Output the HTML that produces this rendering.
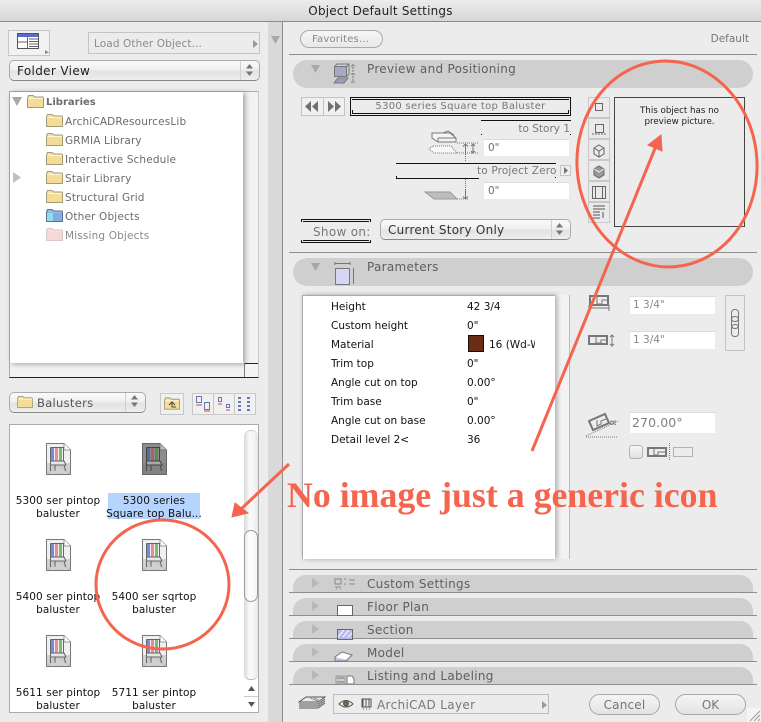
<!DOCTYPE html>
<html><head><meta charset="utf-8">
<style>
*{box-sizing:border-box}
html,body{margin:0;padding:0}
body{width:761px;height:722px;position:relative;overflow:hidden;background:#ececec;font-family:"DejaVu Sans","Liberation Sans",sans-serif;font-size:10.5px;color:#000}
div,span.a{position:absolute}
.t{white-space:nowrap;line-height:14px;height:14px}
.g{color:#666}
.lib{color:#6b6b6b;font-size:10.5px;letter-spacing:.15px}
.bar{left:293px;width:460px;background:#cfcfcf;border-radius:13px 13px 0 0}
.line{left:289px;width:468px;height:1px;background:#8e8e8e}
.barT{left:367px;color:#5f5f5f;font-size:12px;letter-spacing:.3px}
.pop{background:linear-gradient(#fafafa,#f0f0f0 45%,#e2e2e2 55%,#eee);border:1px solid #aaa;border-bottom-color:#888;border-radius:5px}
.field{background:#fff;border:1px solid #eaeaea;border-top-color:#dcdcdc;font-size:10.5px;color:#6e6e6e;padding-left:4px;line-height:17px}
.sb{background:#e9e9e9;border:1px solid #c4c4c4}
.p{left:331px;font-size:10.5px;color:#111}
.v{left:467px;font-size:10.5px;color:#111}
.lab{width:110px;text-align:center;font-size:10.5px;color:#111;letter-spacing:.1px}
.side{left:588px;width:22px;height:21px;background:#eaeaea;border:1px solid #c8c8c8}
.ch{width:25px;height:32px}
</style></head><body>
<svg width="0" height="0" style="position:absolute">
<defs>
<symbol id="fold" viewBox="0 0 17 13"><path d="M1 3V1.500Q1 .5 2 .5H6L8 2H15.500Q16.500 2 16.500 3V12.500H.5V3Z" fill="#f4e3a8" stroke="#a39a78"/><rect x="1" y="4" width="15" height="8" fill="#f3dc96"/><rect x="1" y="3" width="15" height="1" fill="#fff6d2"/></symbol>
<symbol id="foldb" viewBox="0 0 17 13"><path d="M1 3V1.500Q1 .5 2 .5H6L8 2H15.500Q16.500 2 16.500 3V12.500H.5V3Z" fill="#8fbce0" stroke="#5c6f96"/><rect x="1" y="4" width="15" height="8" fill="#7faee0"/><rect x="1" y="4" width="6" height="8" fill="#8fdcec"/></symbol>
<symbol id="foldr" viewBox="0 0 17 13"><path d="M1 3V1.500Q1 .5 2 .5H6L8 2H15.500Q16.500 2 16.500 3V12.500H.5V3Z" fill="#f6dedc" stroke="#d8c8c6"/><rect x="1" y="4" width="15" height="8" fill="#f5d9d6"/></symbol>
<symbol id="chair" viewBox="0 0 25 32">
<path d="M.5.5H18L24.500 7V31.500H.5Z" fill="#f0f0f0" stroke="#777"/><path d="M18 .5V7H24.500" fill="#fff" stroke="#999"/>
<path d="M1 20H24V31H1Z" fill="#d0d0d0"/><path d="M1 31L12 21L24 31" fill="none" stroke="#bbb"/>
<rect x="5" y="5" width="3" height="14" fill="#7c86e8"/><rect x="8" y="5" width="3" height="14" fill="#eee"/><rect x="9" y="5" width="3" height="14" fill="#e88c8c"/><rect x="13" y="5" width="3" height="14" fill="#7cb87c"/>
<path d="M4.500 4.500H17.500V19M4.500 4.500V28M17.500 19L19.500 28" fill="none" stroke="#666"/>
<path d="M4.500 18H18L20 22H4.500Z" fill="#e6e6e6" stroke="#666"/><path d="M5 22H20M9 22V28" stroke="#666" fill="none"/>
</symbol>
<symbol id="chairg" viewBox="0 0 25 32">
<path d="M.5.5H18L24.500 7V31.500H.5Z" fill="#8d8d8d" stroke="#666"/><path d="M18 .5V7H24.500" fill="#bbb" stroke="#777"/>
<path d="M1 20H24V31H1Z" fill="#838383"/>
<rect x="5" y="5" width="3" height="14" fill="#5f66a8"/><rect x="9" y="5" width="3" height="14" fill="#a06464"/><rect x="13" y="5" width="3" height="14" fill="#5a8a5a"/>
<path d="M4.500 4.500H17.500V19M4.500 4.500V28M17.500 19L19.500 28" fill="none" stroke="#444"/>
<path d="M4.500 18H18L20 22H4.500Z" fill="#a8a8a8" stroke="#444"/><path d="M5 22H20M9 22V28" stroke="#444" fill="none"/>
</symbol>
</defs></svg>

<!-- title bar -->
<div style="left:0;top:0;width:761px;height:22px;background:linear-gradient(#ededed,#d6d6d6);border-bottom:1px solid #8c8c8c"></div>
<div class="t" style="left:0;width:761px;top:4px;text-align:center;font-size:12px;color:#222;letter-spacing:.2px">Object Default Settings</div>

<!-- divider -->
<div style="left:268px;top:22px;width:14px;height:700px;background:#d9d9d9"></div>
<div style="left:282px;top:22px;width:1px;height:700px;background:#8e8e8e"></div>
<svg style="position:absolute;left:271px;top:36px" width="9" height="9"><path d="M0 0H9L4.500 8Z" fill="#a9a9a9"/></svg>

<!-- left top -->
<div style="left:8px;top:30px;width:42px;height:26px;border:1px solid #c6c6c6;background:#f2f2f2"></div>
<svg style="position:absolute;left:17px;top:33px" width="22" height="16"><rect x=".5" y=".5" width="21" height="15" fill="#fff" stroke="#555"/><rect x="1" y="1" width="20" height="3" fill="#5b6bc8"/><path d="M.5 9H10M10.500 4V15M12 6H21M12 8.500H21M12 11H21M12 13.500H21" stroke="#666" fill="none"/></svg>
<svg style="position:absolute;left:44px;top:49px" width="6" height="6"><path d="M1 1L5 3.500L1 5Z" fill="#888"/></svg>
<div style="left:88px;top:32px;width:172px;height:22px;border:1px solid #c4c4c4;background:#ececec"></div>
<div class="t" style="left:94px;top:37px;color:#8b8b8b;letter-spacing:.1px">Load Other Object...</div>
<svg style="position:absolute;left:253px;top:40px" width="6" height="8"><path d="M0 0L5 4L0 8Z" fill="#999"/></svg>
<div class="pop" style="left:9px;top:60px;width:251px;height:21px"></div>
<div class="t" style="left:17px;top:64px;font-size:12px;color:#222;letter-spacing:.35px">Folder View</div>
<div style="left:240px;top:61px;width:1px;height:19px;background:#d0d0d0"></div>
<svg style="position:absolute;left:245px;top:64px" width="9" height="13"><path d="M4.500 0L8 4.500H1ZM4.500 12L8 7.500H1Z" fill="#777"/></svg>

<!-- tree -->
<div style="left:9px;top:91px;width:250px;height:287px;background:#f2f2f2;border:1px solid #aaa;border-bottom-color:#222;border-right-color:#c8c8c8"></div>
<div style="left:10px;top:92px;width:233px;height:271px;background:#fff;box-shadow:2px 1px 5px rgba(0,0,0,.35)"></div>
<div style="left:244px;top:363px;width:14px;height:14px;background:#f4f4f4;border-left:1px solid #777;border-top:1px solid #222"></div>
<svg style="position:absolute;left:12px;top:97px" width="11" height="9"><path d="M0 0H10L5 9Z" fill="#a8a8a8"/></svg>
<svg style="position:absolute;left:13px;top:172px" width="9" height="11"><path d="M0 0L8 5.500L0 11Z" fill="#c0c0c0"/></svg>
<svg style="position:absolute;left:27px;top:95px" width="17" height="13"><use href="#fold"/></svg>
<svg style="position:absolute;left:46px;top:114px" width="17" height="13"><use href="#fold"/></svg>
<svg style="position:absolute;left:46px;top:133px" width="17" height="13"><use href="#fold"/></svg>
<svg style="position:absolute;left:46px;top:152px" width="17" height="13"><use href="#fold"/></svg>
<svg style="position:absolute;left:46px;top:171px" width="17" height="13"><use href="#fold"/></svg>
<svg style="position:absolute;left:46px;top:190px" width="17" height="13"><use href="#fold"/></svg>
<svg style="position:absolute;left:46px;top:209px" width="17" height="13"><use href="#foldb"/></svg>
<svg style="position:absolute;left:46px;top:228px" width="17" height="13"><use href="#foldr"/></svg>
<div class="t lib" style="left:46px;top:96px;font-weight:bold;font-size:10px;letter-spacing:0">Libraries</div>
<div class="t lib" style="left:65px;top:115px">ArchiCADResourcesLib</div>
<div class="t lib" style="left:65px;top:134px">GRMIA Library</div>
<div class="t lib" style="left:65px;top:153px">Interactive Schedule</div>
<div class="t lib" style="left:65px;top:172px">Stair Library</div>
<div class="t lib" style="left:65px;top:191px">Structural Grid</div>
<div class="t lib" style="left:65px;top:210px">Other Objects</div>
<div class="t lib" style="left:65px;top:229px;color:#8a8a8a">Missing Objects</div>

<!-- balusters row -->
<div class="pop" style="left:9px;top:392px;width:137px;height:21px"></div>
<svg style="position:absolute;left:17px;top:396px" width="16" height="12"><use href="#fold"/></svg>
<div class="t" style="left:37px;top:396px;font-size:11.500px;color:#555;letter-spacing:.3px">Balusters</div>
<div style="left:125px;top:393px;width:1px;height:19px;background:#d0d0d0"></div>
<svg style="position:absolute;left:130px;top:395px" width="9" height="13"><path d="M4.500 0L8 4.500H1ZM4.500 12L8 7.500H1Z" fill="#777"/></svg>
<div style="left:160px;top:393px;width:24px;height:22px;border:1px solid #c8c8c8;background:#f0f0f0"></div>
<svg style="position:absolute;left:164px;top:397px" width="16" height="13"><use href="#fold"/><path d="M5 8L8 5L11 8M8 5V10H12" stroke="#444" fill="none"/></svg>
<div style="left:192px;top:393px;width:64px;height:22px;border:1px solid #c8c8c8;background:#f0f0f0"></div>
<div style="left:213px;top:393px;width:1px;height:22px;background:#c8c8c8"></div>
<div style="left:234px;top:393px;width:1px;height:22px;background:#c8c8c8"></div>
<svg style="position:absolute;left:195px;top:395px" width="60" height="18" fill="none"><rect x="1.500" y="1.500" width="5" height="6" stroke="#6a74b8"/><path d="M1 10H7" stroke="#c05050"/><rect x="9.500" y="7.500" width="5" height="7" stroke="#6a74b8"/><path d="M9 16H15" stroke="#c05050"/><rect x="23.500" y="2.500" width="3" height="4" stroke="#6a74b8"/><path d="M23 9H27" stroke="#c05050"/><rect x="31.500" y="9.500" width="3" height="3" stroke="#6a74b8"/><path d="M31 15H35" stroke="#c05050"/><path d="M43 3H46M43 7H46M43 11H46M43 15H46M52 3H55M52 7H55M52 11H55M52 15H55" stroke="#6a74b8" stroke-width="2"/></svg>

<!-- object list -->
<div style="left:9px;top:424px;width:250px;height:289px;background:#fff;border:1px solid #aaa"></div>
<div style="left:244px;top:425px;width:14px;height:287px;background:#fff"></div>
<div style="left:244px;top:430px;width:14px;height:250px;background:linear-gradient(90deg,#d8d8d8,#fafafa 40%,#f6f6f6 70%,#e6e6e6);border-radius:7px 7px 6px 6px;border-top:1px solid #ccc;border-bottom:1px solid #bbb"></div>
<div style="left:244px;top:530px;width:14px;height:72px;background:linear-gradient(90deg,#ececec,#fff 40%,#f4f4f4);border:1px solid #9a9a9a;border-radius:7px"></div>
<div style="left:244px;top:696px;width:14px;height:1px;background:#ccc"></div>
<svg style="position:absolute;left:247px;top:686px" width="9" height="22"><path d="M4.500 0L8 5H1ZM4.500 21L8 16H1Z" fill="#555"/></svg>
<div style="left:108px;top:493px;width:92px;height:26px;background:#b5d5ff"></div>
<svg style="position:absolute;left:46px;top:443px" width="25" height="32"><use href="#chair"/></svg>
<svg style="position:absolute;left:142px;top:443px" width="25" height="32"><use href="#chairg"/></svg>
<svg style="position:absolute;left:46px;top:539px" width="25" height="32"><use href="#chair"/></svg>
<svg style="position:absolute;left:142px;top:539px" width="25" height="32"><use href="#chair"/></svg>
<svg style="position:absolute;left:46px;top:635px" width="25" height="32"><use href="#chair"/></svg>
<svg style="position:absolute;left:142px;top:635px" width="25" height="32"><use href="#chair"/></svg>
<div class="t lab" style="left:3px;top:494px">5300 ser pintop</div><div class="t lab" style="left:3px;top:507px">baluster</div>
<div class="t lab" style="left:99px;top:494px">5300 series</div><div class="t lab" style="left:99px;top:507px">Square top Balu...</div>
<div class="t lab" style="left:3px;top:590px">5400 ser pintop</div><div class="t lab" style="left:3px;top:603px">baluster</div>
<div class="t lab" style="left:99px;top:590px">5400 ser sqrtop</div><div class="t lab" style="left:99px;top:603px">baluster</div>
<div class="t lab" style="left:3px;top:686px">5611 ser pintop</div><div class="t lab" style="left:3px;top:699px">baluster</div>
<div class="t lab" style="left:99px;top:686px">5711 ser pintop</div><div class="t lab" style="left:99px;top:699px">baluster</div>

<!-- right top -->
<div style="left:300px;top:30px;width:83px;height:18px;border:1px solid #aaa;border-radius:9px;background:linear-gradient(#f6f6f6,#e8e8e8)"></div>
<div class="t" style="left:312px;top:33px;font-size:10px;color:#888;letter-spacing:.2px">Favorites...</div>
<div class="t" style="right:12px;top:32px;font-size:10.500px;color:#777">Default</div>
<div class="line" style="top:54px"></div>
<div class="bar" style="top:60px;height:28px;border-radius:14px"></div>
<svg style="position:absolute;left:311px;top:65px" width="10" height="8"><path d="M0 0H9L4.500 8Z" fill="#a8a8a8"/></svg>
<svg style="position:absolute;left:333px;top:63px" width="26" height="22" fill="none"><rect x="1.500" y="3.500" width="12" height="10" fill="#a5a9c6" stroke="#777"/><path d="M1.500 3.500L4 1H16V11L13.500 13.500M13.500 3.500L16 1" stroke="#777"/><path d="M5 15H15L11 20H1Z" fill="#9a9fbe" stroke="#777"/><path d="M20 1V20M18 3H22M18 11H22M18 19H22" stroke="#777" stroke-dasharray="2 1"/></svg>
<div class="t barT" style="top:62px">Preview and Positioning</div>

<!-- nav -->
<div style="left:301px;top:97px;width:44px;height:19px;border:1px solid #c4c4c4;background:#f0f0f0"></div>
<div style="left:323px;top:97px;width:1px;height:19px;background:#c4c4c4"></div>
<svg style="position:absolute;left:305px;top:101px" width="36" height="11"><path d="M6 0V11L0 5.500ZM13 0V11L7 5.500ZM23 0V11L29 5.500ZM30 0V11L36 5.500Z" fill="#707070"/></svg>
<div style="left:350px;top:97px;width:221px;height:19px;border:1px solid #111"></div>
<div style="left:352px;top:99px;width:217px;height:15px;border-bottom:1px solid #111;border-left:1px solid #111;border-right:1px solid #111;clip-path:inset(11px 0 0 0)"></div>
<div style="left:352px;top:99px;width:217px;height:1px;background:#111"></div>
<div class="t" style="left:350px;width:221px;top:100px;text-align:center;font-size:10px;color:#777;letter-spacing:.3px">5300 series Square top Baluster</div>

<!-- story -->
<div style="left:481px;top:120px;width:90px;height:1px;background:#111"></div>
<div class="t" style="right:191px;top:122px;font-size:10.500px;color:#7a7a7a">to Story 1</div>
<div style="left:481px;top:134px;width:1px;height:1px;background:#111"></div>
<div style="left:570px;top:134px;width:1px;height:1px;background:#111"></div>
<div class="field" style="left:483px;top:139px;width:87px;height:18px">0"</div>
<svg style="position:absolute;left:428px;top:130px" width="54" height="32" fill="none" stroke="#777"><path d="M4 3H22L28 8V12H10L4 8ZM10 8H28M10 8V12M15 3L20 1L26 5" fill="#f4f4f4"/><path d="M5 16H23L29 23H6L1 19Z" stroke-dasharray="1 1" fill="#f8f8f8"/><path d="M29 13H50M29 23H50M37.500 24V31" stroke-dasharray="1 1"/><path d="M37.500 14V24M35 16.500L37.500 14L40 16.500"/><path d="M45 14V23M43 16L45 14L47 16M43 21L45 23L47 21"/></svg>
<div style="left:396px;top:163px;width:160px;height:1px;background:#111"></div>
<div style="left:396px;top:178px;width:83px;height:1px;background:#111"></div>
<div style="left:396px;top:176px;width:1px;height:2px;background:#111"></div>
<div style="left:555px;top:177px;width:1px;height:1px;background:#111"></div>
<div class="t" style="left:477px;top:164px;font-size:10.500px;color:#7a7a7a;letter-spacing:.15px">to Project Zero</div>
<div style="left:560px;top:165px;width:11px;height:11px;border:1px solid #c4c4c4;background:#eee"></div>
<svg style="position:absolute;left:563px;top:167px" width="6" height="7"><path d="M1 0L5 3.500L1 7Z" fill="#777"/></svg>
<div class="field" style="left:483px;top:182px;width:87px;height:18px">0"</div>
<svg style="position:absolute;left:424px;top:178px" width="56" height="24" fill="none" stroke="#999"><path d="M1 14H26L33 21H10Z" fill="#bdbdbd"/><path d="M33 21H44M41.500 1V12" stroke="#777" stroke-dasharray="1 1"/><path d="M41.500 11V21M39 18.500L41.500 21L44 18.500" stroke="#777"/></svg>
<div style="left:301px;top:219px;width:70px;height:3px;border:1px solid #111;border-bottom:0"></div>
<div style="left:303px;top:221px;width:66px;height:1px;background:#111"></div>
<div style="left:301px;top:240px;width:70px;height:3px;border:1px solid #111;border-top:0"></div>
<div style="left:303px;top:240px;width:66px;height:1px;background:#111"></div>
<div class="t" style="left:313px;top:225px;font-size:12px;color:#777;letter-spacing:.3px">Show on:</div>
<div class="pop" style="left:380px;top:219px;width:191px;height:21px"></div>
<div class="t" style="left:388px;top:223px;font-size:12px;color:#333;letter-spacing:.25px">Current Story Only</div>
<div style="left:551px;top:220px;width:1px;height:19px;background:#d0d0d0"></div>
<svg style="position:absolute;left:555px;top:223px" width="9" height="13"><path d="M4.500 0L8 4.500H1ZM4.500 12L8 7.500H1Z" fill="#777"/></svg>

<!-- side buttons -->
<div class="side" style="top:97px"></div><div class="side" style="top:118px"></div><div class="side" style="top:139px"></div><div class="side" style="top:160px"></div><div class="side" style="top:181px"></div><div class="side" style="top:202px"></div>
<svg style="position:absolute;left:590px;top:98px" width="18" height="125" fill="none" stroke="#666">
<rect x="5.500" y="5.500" width="7" height="7"/>
<rect x="5.500" y="26.500" width="8" height="8"/><path d="M2 36H16" stroke-dasharray="2 1"/>
<path d="M9 47L14 50V56L9 59L4 56V50ZM4 50L9 53L14 50M9 53V59"/>
<path d="M9 68L14 71V77L9 80L4 77V71Z" fill="#999"/><path d="M4 71L9 74L14 71" stroke="#eee"/>
<rect x="2.500" y="88.500" width="13" height="12"/><path d="M5.500 88V101M12.500 88V101"/>
<path d="M3 108H15M3 111H15M3 114H10M3 117H10M3 120H10M13 114V120" stroke="#555"/>
</svg>
<div style="left:614px;top:97px;width:131px;height:130px;border:1px solid #444;background:#ececec"></div>
<div class="t" style="left:614px;width:131px;top:106px;text-align:center;font-size:8.700px;line-height:11px;color:#222">This object has no</div>
<div class="t" style="left:614px;width:131px;top:117px;text-align:center;font-size:8.700px;line-height:11px;color:#222">preview picture.</div>

<!-- parameters -->
<div class="line" style="top:252px"></div>
<div class="bar" style="top:258px;height:28px;border-radius:14px"></div>
<svg style="position:absolute;left:311px;top:263px" width="10" height="8"><path d="M0 0H9L4.500 8Z" fill="#a8a8a8"/></svg>
<svg style="position:absolute;left:333px;top:261px" width="26" height="25" fill="none" stroke="#777"><rect x="2.500" y="7.500" width="14" height="16" fill="#d4d6f4"/><path d="M2 2.500H17M2 1V4M17 1V4M20.500 7V23"/></svg>
<div class="t barT" style="top:260px">Parameters</div>

<div style="left:302px;top:295px;width:267px;height:264px;background:#f2f2f2"></div>
<div style="left:302px;top:295px;width:253px;height:264px;background:#fff;border:1px solid #aaa;border-bottom:0;border-right:0;box-shadow:2px 0 5px rgba(0,0,0,.3)"></div>
<div style="left:569px;top:295px;width:1px;height:264px;background:#bbb"></div>
<div class="t p" style="top:300px">Height</div><div class="t v" style="top:300px">42 3/4</div>
<div class="t p" style="top:319px">Custom height</div><div class="t v" style="top:319px">0"</div>
<div class="t p" style="top:338px">Material</div>
<div style="left:468px;top:335px;width:16px;height:17px;background:#6b2c14;border:1px solid #111"></div>
<div class="t" style="left:489px;top:338px;width:46px;overflow:hidden;color:#111">16 (Wd-Wall)</div>
<div class="t p" style="top:357px">Trim top</div><div class="t v" style="top:357px">0"</div>
<div class="t p" style="top:376px">Angle cut on top</div><div class="t v" style="top:376px">0.00°</div>
<div class="t p" style="top:395px">Trim base</div><div class="t v" style="top:395px">0"</div>
<div class="t p" style="top:414px">Angle cut on base</div><div class="t v" style="top:414px">0.00°</div>
<div class="t p" style="top:433px">Detail level 2&lt;</div><div class="t v" style="top:433px">36</div>

<svg style="position:absolute;left:587px;top:294px" width="34" height="22" fill="none" stroke="#777"><rect x="3" y="2" width="18" height="9" stroke-width="2"/><path d="M10 3V10H15V6H20" /><path d="M2 14H22M2 11V17M22 11V17"/></svg>
<svg style="position:absolute;left:587px;top:334px" width="34" height="14" fill="none" stroke="#777"><rect x="2" y="2" width="18" height="8" stroke-width="2"/><path d="M9 3V9H14V6H19"/><path d="M25 1V12M23 3L25 1L27 3M23 10L25 12L27 10"/></svg>
<div class="field" style="left:629px;top:296px;width:87px;height:19px;padding-left:3px;line-height:17px;color:#888">1 3/4"</div>
<div class="field" style="left:629px;top:331px;width:87px;height:19px;padding-left:3px;line-height:17px;color:#888">1 3/4"</div>
<div style="left:725px;top:295px;width:20px;height:56px;border:1px solid #c4c4c4;background:#ececec"></div>
<svg style="position:absolute;left:730px;top:309px" width="10" height="28" fill="none" stroke="#777"><rect x="1.500" y=".5" width="7" height="12" rx="3"/><rect x="1.500" y="7.500" width="7" height="12" rx="3"/><rect x="1.500" y="15.500" width="7" height="12" rx="3"/></svg>
<svg style="position:absolute;left:586px;top:412px" width="36" height="26" fill="none" stroke="#777"><path d="M3 9L19 2L23 11L7 18Z" stroke-width="2"/><path d="M11 8V14L15 12V9L20 7" /><path d="M0 24L32 9" stroke-dasharray="1 1"/><path d="M0 25H32" stroke-dasharray="1 1"/></svg>
<div class="t" style="left:609px;top:416px;font-size:11px;font-weight:bold;color:#777;width:16px">∝</div>
<div class="field" style="left:629px;top:412px;width:87px;height:22px;font-size:12.500px;line-height:19px;padding-left:2px;letter-spacing:.1px;color:#808080">270.00°</div>
<div style="left:629px;top:445px;width:14px;height:14px;background:linear-gradient(#f6f6f6,#dfdfdf);border:1px solid #b4b4b4;border-radius:3px"></div>
<svg style="position:absolute;left:646px;top:442px" width="48" height="20" fill="none" stroke="#777"><rect x="2" y="6" width="18" height="8" stroke-width="2"/><path d="M8 7V13H12V10H19"/><path d="M23.500 1V19" stroke-dasharray="1 1"/><rect x="27.500" y="5.500" width="19" height="9" stroke-dasharray="1 1"/></svg>

<!-- collapsed bars -->
<div class="line" style="top:569px"></div>
<div class="bar" style="top:575px;height:17px"></div><div class="line" style="top:592px"></div>
<div class="bar" style="top:598px;height:17px"></div><div class="line" style="top:615px"></div>
<div class="bar" style="top:621px;height:17px"></div><div class="line" style="top:638px"></div>
<div class="bar" style="top:644px;height:17px"></div><div class="line" style="top:661px"></div>
<div class="bar" style="top:667px;height:17px"></div><div class="line" style="top:684px"></div>
<svg style="position:absolute;left:311px;top:578px" width="10" height="105" fill="#b8b8b8"><path d="M1 0L8 5L1 10ZM1 23L8 28L1 33ZM1 46L8 51L1 56ZM1 69L8 74L1 79ZM1 92L8 97L1 102Z"/></svg>
<svg style="position:absolute;left:333px;top:577px" width="26" height="107" fill="none" stroke="#777">
<path d="M2 2H8V7H2ZM2 10H8M11 2H13M11 7H13M16 3H22M16 7H22M3 12H4M7 12H8" stroke="#888"/>
<rect x="4.500" y="28.500" width="15" height="10" fill="#fff" stroke="#666"/>
<rect x="4.500" y="52.500" width="15" height="10" fill="#b8bce8" stroke="#666"/><path d="M5 60L11 53M10 60L16 53M15 60L19 56" stroke="#fff"/><path d="M4.500 52.500H19.500" stroke="#666"/>
<path d="M2 80L9 75L19 78L14 83L4 84Z" fill="#fff" stroke="#777"/><path d="M2 80V84H14V83" fill="#c6c8e6"/>
<path d="M3 99H12V107H3Z" fill="#ccc" stroke="#999"/><path d="M4 101H11M4 105H11" stroke="#777"/><path d="M14 99H19L21 102V107H14Z" fill="#fff"/>
</svg>
<div class="t barT" style="top:577px;height:14px">Custom Settings</div>
<div class="t barT" style="top:600px">Floor Plan</div>
<div class="t barT" style="top:623px">Section</div>
<div class="t barT" style="top:646px">Model</div>
<div class="t barT" style="top:669px">Listing and Labeling</div>

<!-- footer -->
<svg style="position:absolute;left:298px;top:696px" width="28" height="16" fill="none" stroke="#555"><path d="M8 1H27L20 6H1ZM1 8H20L27 3M1 10H20L27 5M1 12H20L27 7"/><path d="M12 2L20 5M16 2L23 5" stroke="#999"/></svg>
<div style="left:333px;top:694px;width:216px;height:20px;border:1px solid #bcbcbc;background:#ececec"></div>
<svg style="position:absolute;left:338px;top:698px" width="34" height="13" fill="none" stroke="#555"><path d="M1 6Q8 -1 15 6Q8 12 1 6Z"/><circle cx="8" cy="5.500" r="2.500" fill="#7a6a3a"/><path d="M25 1V9M28 1V9M31 1V9M24 1H33V9H24ZM25 11H26M28 11H29M31 11H32"/></svg>
<div class="t" style="left:377px;top:698px;font-size:12px;color:#777;letter-spacing:.35px">ArchiCAD Layer</div>
<svg style="position:absolute;left:542px;top:701px" width="6" height="8"><path d="M0 0L5 4L0 8Z" fill="#999"/></svg>
<div style="left:589px;top:694px;width:71px;height:21px;border:1px solid #a8a8a8;border-radius:11px;background:linear-gradient(#f4f4f4,#ececec 50%,#e2e2e2)"></div>
<div style="left:675px;top:694px;width:71px;height:21px;border:1px solid #a8a8a8;border-radius:11px;background:linear-gradient(#f4f4f4,#ececec 50%,#e2e2e2)"></div>
<div class="t" style="left:589px;width:71px;top:698px;text-align:center;font-size:12px;color:#777;letter-spacing:.2px">Cancel</div>
<div class="t" style="left:675px;width:71px;top:698px;text-align:center;font-size:12px;color:#777">OK</div>
<div style="left:747px;top:708px;width:14px;height:14px;background:#f4f4f4"></div>
<svg style="position:absolute;left:747px;top:708px" width="14" height="14" stroke="#999"><path d="M3 13L13 3M7 13L13 7M11 13L13 11"/></svg>

<!-- annotations -->
<svg style="position:absolute;left:0;top:0" width="761" height="722" fill="none">
<ellipse cx="667" cy="164" rx="90" ry="103" stroke="#f4644e" stroke-width="3" transform="rotate(-4 667 164)"/>
<ellipse cx="162.500" cy="584.500" rx="66.500" ry="64.500" stroke="#f4644e" stroke-width="3"/>
<path d="M532 451L656 146" stroke="#f4644e" stroke-width="3"/>
<path d="M661 135L648 145L662 151Z" fill="#f4644e" stroke="#f4644e"/>
<path d="M289 464L240 510" stroke="#f4644e" stroke-width="3"/>
<path d="M232 517L235 503L248 513Z" fill="#f4644e" stroke="#f4644e"/>
</svg>
<div class="t" style="left:287px;top:475px;height:40px;line-height:40px;font-family:'Liberation Serif',serif;font-weight:bold;font-size:35.800px;color:#f4644e">No image just a generic icon</div>
</body></html>
